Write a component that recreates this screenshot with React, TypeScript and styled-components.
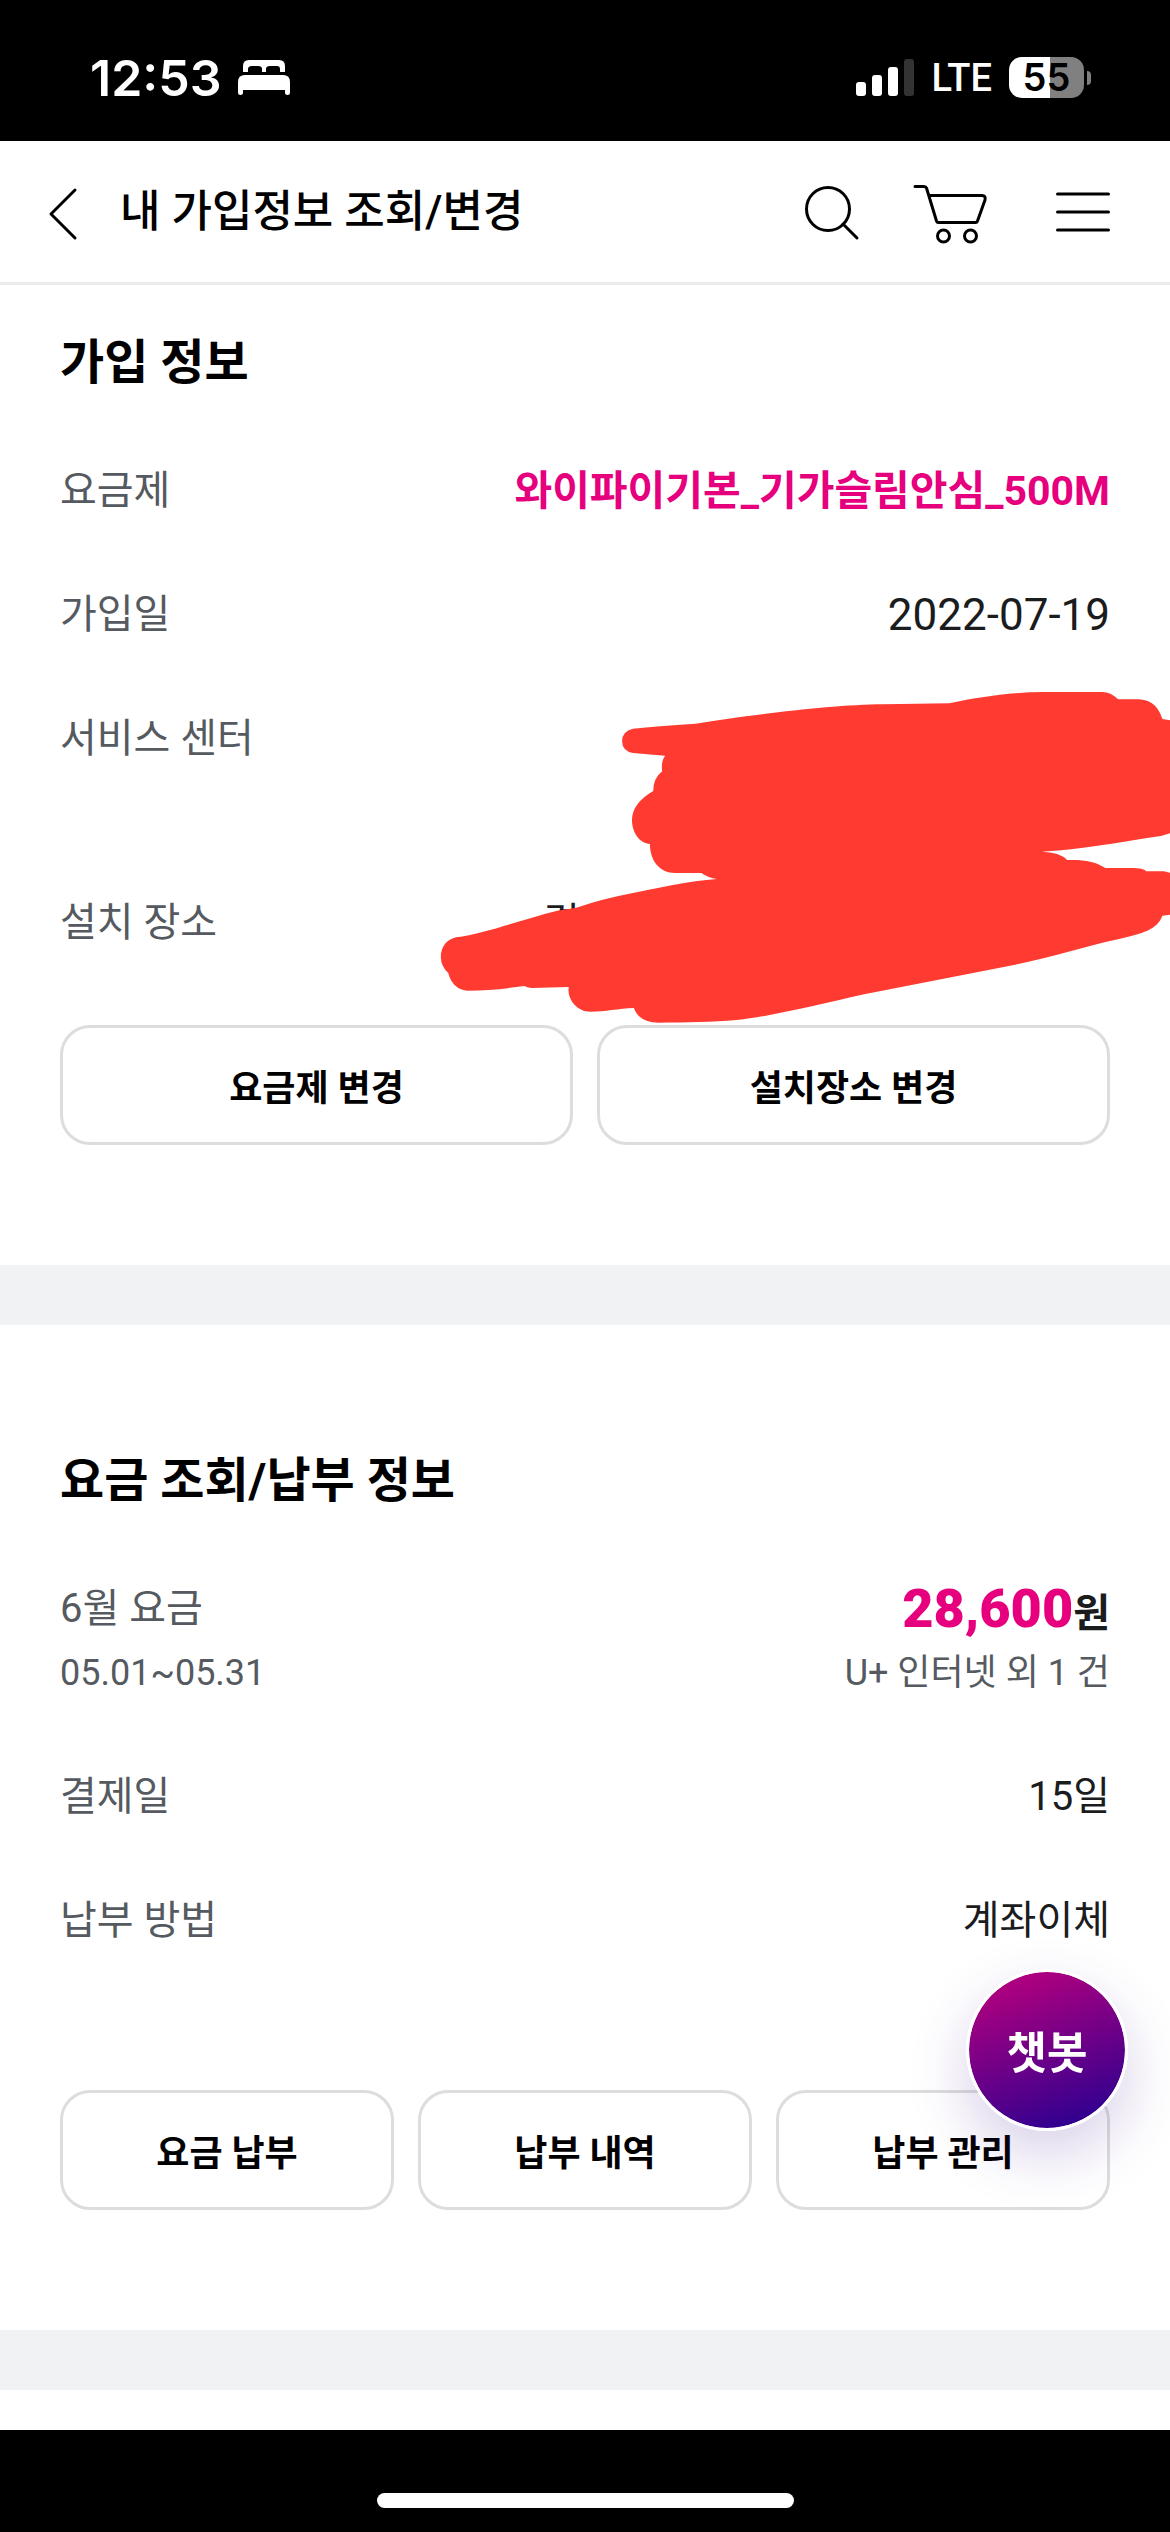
import React from "react";
import styled, { createGlobalStyle } from "styled-components";

const GlobalStyle = createGlobalStyle`
  *, *::before, *::after { box-sizing: border-box; }
  html, body { margin: 0; padding: 0; background: #ffffff; }
  body { font-family: Roboto, "Noto Sans CJK KR", sans-serif; color: #1a1c1e; }
  h1, h2, dl, dt, dd { margin: 0; font-weight: inherit; }
  button { font: inherit; color: inherit; margin: 0; cursor: pointer; }
`;

const Page = styled.div`
  display: flex;
  flex-direction: column;
  min-height: 100vh;
`;

const StatusBar = styled.div`
  display: flex;
  align-items: center;
  justify-content: space-between;
  height: 141px;
  padding: 14px 79px 0 90px;
  background: #000000;
  color: #ffffff;
`;

const StatusGroup = styled.div<{ $gap: number }>`
  display: flex;
  align-items: center;
  gap: ${(p) => p.$gap}px;
  svg { display: block; }
`;

const Clock = styled.span`
  font-family: Inter, sans-serif;
  font-size: 50px;
  font-weight: 600;
  line-height: 60px;
`;

const Network = styled.span`
  font-size: 38px;
  font-weight: 500;
  line-height: 48px;
`;

const Battery = styled.span`
  display: flex;
  align-items: center;
  gap: 3px;
`;

const BatteryBody = styled.span<{ $level: number }>`
  display: flex;
  align-items: center;
  justify-content: center;
  width: 75px;
  height: 41px;
  border-radius: 13px;
  background: linear-gradient(
    to right,
    #ffffff ${(p) => p.$level}%,
    #808080 ${(p) => p.$level}%
  );
  color: #000000;
  font-family: Inter, sans-serif;
  font-size: 38px;
  font-weight: 600;
  line-height: 41px;
`;

const BatteryCap = styled.span`
  width: 4px;
  height: 14px;
  border-radius: 0 4px 4px 0;
  background: #808080;
`;

const Header = styled.header`
  display: flex;
  align-items: center;
  height: 144px;
  padding: 0 60px 0 48px;
  border-bottom: 3px solid #ebebeb;
  color: #000000;
`;

const IconButton = styled.button`
  display: block;
  padding: 0;
  border: 0;
  background: none;
  svg { display: block; }
`;

const Title = styled.h1`
  flex: 1;
  margin-left: 42px;
  font-size: 44px;
  font-weight: 500;
  line-height: 64px;
`;

const HeaderActions = styled.nav`
  display: flex;
  gap: 52px;
`;

const Section = styled.section<{ $top: number }>`
  position: relative;
  padding: ${(p) => p.$top}px 60px 120px;
`;

const Heading = styled.h2`
  margin-bottom: 60px;
  color: #000000;
  font-size: 48px;
  font-weight: 700;
  line-height: 72px;
`;

const Rows = styled.dl`
  display: flex;
  flex-direction: column;
  gap: 60px;
`;

const Row = styled.div<{ $tall?: boolean }>`
  display: flex;
  justify-content: space-between;
  min-height: ${(p) => (p.$tall ? 124 : 64)}px;
  font-size: 40px;
  line-height: 64px;
`;

const Label = styled.dt`
  color: #555a60;
`;

const Value = styled.dd`
  color: #1a1c1e;
  text-align: right;
`;

const PlanName = styled(Value)`
  color: #e6007e;
  font-size: 41px;
  font-weight: 700;
`;

const DateValue = styled(Value)`
  font-size: 44px;
`;

const Address = styled(Value)`
  width: 54%;
  text-align: left;
`;

const Sub = styled.span`
  display: block;
  color: #555a60;
  font-size: 36px;
  line-height: 64px;
`;

const Price = styled.span`
  display: flex;
  align-items: baseline;
  justify-content: flex-end;
  height: 64px;
  font-weight: 700;
`;

const Amount = styled.strong`
  color: #e6007e;
  font-size: 54px;
`;

const Actions = styled.div<{ $top: number }>`
  display: flex;
  gap: 24px;
  margin-top: ${(p) => p.$top}px;
`;

const ActionButton = styled.button`
  flex: 1;
  height: 120px;
  padding: 0;
  border: 3px solid #dddddd;
  border-radius: 30px;
  background: #ffffff;
  color: #000000;
  font-size: 36px;
  font-weight: 700;
`;

const Divider = styled.div`
  height: 60px;
  background: #f1f2f4;
`;

const NextSection = styled.div`
  flex: 1;
  min-height: 40px;
`;

const HomeArea = styled.footer`
  display: flex;
  align-items: flex-end;
  justify-content: center;
  height: 102px;
  padding-bottom: 24px;
  background: #000000;
`;

const HomeIndicator = styled.span`
  width: 417px;
  height: 15px;
  border-radius: 8px;
  background: #ffffff;
`;

const Scribble = styled.svg`
  position: absolute;
  top: 385px;
  right: 0;
  width: 740px;
  height: 370px;
  pointer-events: none;
`;

const ChatbotButton = styled.button`
  position: fixed;
  right: 42px;
  bottom: 401px;
  width: 162px;
  height: 162px;
  padding: 0;
  border: 3px solid #ffffff;
  border-radius: 50%;
  background: linear-gradient(160deg, #c4007c 0%, #2a0090 92%) border-box;
  background-clip: padding-box;
  box-shadow: 0 24px 60px rgba(60, 20, 140, 0.2);
  color: #ffffff;
  font-size: 44px;
  font-weight: 700;
`;

const BedIcon = () => (
  <svg width="52" height="36" viewBox="0 0 52 36" fill="#fff" aria-hidden="true">
    <path d="M5 12V6q0-6 6-6h30q6 0 6 6v6h-5V9q0-3-3-3h-7q-4 0-4 3v3h-4V9q0-3-4-3h-6q-4 0-4 3v3z" />
    <path d="M0 33V22q0-7 7-7h38q7 0 7 7v11q0 2-2.500 2t-2.500-2v-3H5v3q0 2-2.500 2T0 33z" />
  </svg>
);

const SignalIcon = () => (
  <svg width="58" height="37" viewBox="0 0 58 37" fill="#fff" aria-hidden="true">
    <rect x="0" y="23" width="10" height="14" rx="3" />
    <rect x="16" y="16" width="10" height="21" rx="3" />
    <rect x="32" y="8" width="10" height="29" rx="3" />
    <rect x="48" y="0" width="10" height="37" rx="3" fill="#333" />
  </svg>
);

const stroke = {
  fill: "none",
  stroke: "#000",
  strokeWidth: 3,
  strokeLinecap: "round" as const,
  strokeLinejoin: "round" as const,
  "aria-hidden": true,
};

const BackIcon = () => (
  <svg width="30" height="61" viewBox="0 0 30 61" {...stroke}>
    <path d="M27 9 3 33l24 24" />
  </svg>
);

const SearchIcon = () => (
  <svg width="60" height="61" viewBox="0 0 60 61" {...stroke}>
    <circle cx="28" cy="28" r="21.500" />
    <path d="m43 43 14 14" />
  </svg>
);

const CartIcon = () => (
  <svg width="92" height="61" viewBox="0 0 92 61" {...stroke} overflow="visible">
    <path d="M3 5.500h9q2 0 2.500 1.500l10 33q.5 1.500 2 1.500h37q1.500 0 2-1.500L73 19q1-4.500-3-4.500H17" />
    <circle cx="31.500" cy="55" r="6" />
    <circle cx="58.500" cy="55" r="6" />
  </svg>
);

const MenuIcon = () => (
  <svg width="54" height="61" viewBox="0 0 54 61" {...stroke}>
    <path d="M1.500 13h51M1.500 31h51M1.500 49h51" />
  </svg>
);

export default function App() {
  return (
    <Page>
      <GlobalStyle />
      <StatusBar>
        <StatusGroup $gap={16}>
          <Clock>12:53</Clock>
          <BedIcon />
        </StatusGroup>
        <StatusGroup $gap={17}>
          <SignalIcon />
          <Network>LTE</Network>
          <Battery>
            <BatteryBody $level={55}>55</BatteryBody>
            <BatteryCap />
          </Battery>
        </StatusGroup>
      </StatusBar>

      <Header>
        <IconButton type="button" aria-label="뒤로">
          <BackIcon />
        </IconButton>
        <Title>내 가입정보 조회/변경</Title>
        <HeaderActions>
          <IconButton type="button" aria-label="검색">
            <SearchIcon />
          </IconButton>
          <IconButton type="button" aria-label="장바구니">
            <CartIcon />
          </IconButton>
          <IconButton type="button" aria-label="메뉴">
            <MenuIcon />
          </IconButton>
        </HeaderActions>
      </Header>

      <Section $top={42}>
        <Heading>가입 정보</Heading>
        <Rows>
          <Row>
            <Label>요금제</Label>
            <PlanName>와이파이기본_기가슬림안심_500M</PlanName>
          </Row>
          <Row>
            <Label>가입일</Label>
            <DateValue>2022-07-19</DateValue>
          </Row>
          <Row $tall>
            <Label>서비스 센터</Label>
          </Row>
          <Row>
            <Label>설치 장소</Label>
            <Address>경</Address>
          </Row>
        </Rows>
        <Actions $top={70}>
          <ActionButton type="button">요금제 변경</ActionButton>
          <ActionButton type="button">설치장소 변경</ActionButton>
        </Actions>
        <Scribble viewBox="0 0 1568 1110" preserveAspectRatio="none" aria-hidden="true">
          <path
            fill="#ff3b31"
            d="M430 176Q480 168 563 161C680 135 850 104 960 103L1100 100C1160 82 1230 66 1300 66H1425Q1442 66 1458 88H1495C1530 88 1543 110 1552 147L1568 151V490Q1550 500 1530 502C1460 518 1370 540 1296 545Q1335 546 1350 570C1385 568 1412 575 1431 594H1490Q1510 594 1518 604H1555L1568 608V734L1552 737C1540 780 1510 790 1460 807C1390 828 1310 865 1240 884L920 973C820 1005 720 1040 650 1050C600 1057 540 1057 485 1058Q443 1058 432 1014C400 1016 370 1025 340 1025C310 1025 290 985 294 951L215 954Q205 952 200 948C160 956 120 962 80 962C55 962 42 930 39 910Q23 888 23 862Q23 815 55 802C120 790 190 750 270 722L310 713Q370 685 420 672C480 655 550 632 608 627Q590 624 575 609H520C485 609 466 570 466 522C445 520 428 490 428 450Q428 400 473 363Q473 325 492 304Q489 275 498 257L430 249Q407 243 407 213Q407 184 430 176Z"
          />
        </Scribble>
      </Section>

      <Divider />

      <Section $top={120}>
        <Heading>요금 조회/납부 정보</Heading>
        <Rows>
          <Row>
            <Label>
              6월 요금
              <Sub>05.01~05.31</Sub>
            </Label>
            <Value>
              <Price>
                <Amount>28,600</Amount>원
              </Price>
              <Sub>U+ 인터넷 외 1 건</Sub>
            </Value>
          </Row>
          <Row>
            <Label>결제일</Label>
            <Value>15일</Value>
          </Row>
          <Row>
            <Label>납부 방법</Label>
            <Value>계좌이체</Value>
          </Row>
        </Rows>
        <Actions $top={137}>
          <ActionButton type="button">요금 납부</ActionButton>
          <ActionButton type="button">납부 내역</ActionButton>
          <ActionButton type="button">납부 관리</ActionButton>
        </Actions>
      </Section>

      <Divider />
      <NextSection />

      <ChatbotButton type="button">챗봇</ChatbotButton>
      <HomeArea>
        <HomeIndicator />
      </HomeArea>
    </Page>
  );
}
